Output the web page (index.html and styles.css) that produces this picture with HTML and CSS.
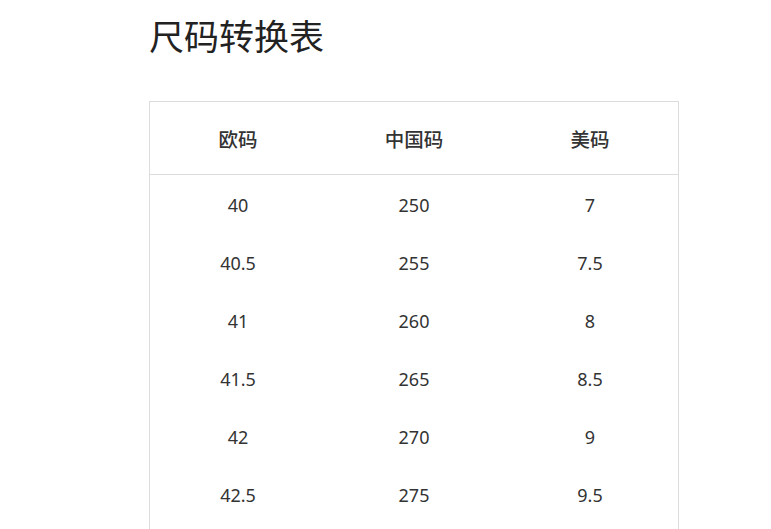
FILE: index.html
```html
<!DOCTYPE html>
<html lang="zh">
<head>
<meta charset="utf-8">
<title>尺码转换表</title>
<link rel="stylesheet" href="styles.css">
</head>
<body>
<div class="page">
  <h1 class="title">尺码转换表</h1>
  <div class="table-wrap">
    <table class="size-table">
      <thead>
        <tr><th>欧码</th><th>中国码</th><th>美码</th></tr>
      </thead>
      <tbody>
        <tr><td>40</td><td>250</td><td>7</td></tr>
        <tr><td>40.5</td><td>255</td><td>7.5</td></tr>
        <tr><td>41</td><td>260</td><td>8</td></tr>
        <tr><td>41.5</td><td>265</td><td>8.5</td></tr>
        <tr><td>42</td><td>270</td><td>9</td></tr>
        <tr><td>42.5</td><td>275</td><td>9.5</td></tr>
      </tbody>
    </table>
  </div>
</div>
</body>
</html>
```
FILE: styles.css
```css
html, body {
  margin: 0;
  padding: 0;
  background: #fff;
}
body {
  font-family: "Noto Sans", "Noto Sans CJK SC", sans-serif;
  color: #333;
}
.page {
  padding: 10px 0 0 149px;
  width: 530px;
}
.title {
  margin: 0;
  font-family: "Noto Sans CJK SC", sans-serif;
  font-size: 35px;
  line-height: 50px;
  font-weight: 400;
  color: #222;
}
.table-wrap {
  margin-top: 41px;
  border: 1px solid #dcdcdc;
  border-bottom: none;
  padding-bottom: 30px;
}
.size-table {
  width: 100%;
  border-collapse: collapse;
  table-layout: fixed;
}
.size-table th {
  height: 72px;
  font-family: "Noto Sans CJK SC", sans-serif;
  font-size: 19.5px;
  font-weight: 500;
  color: #333;
  border-bottom: 1px solid #dcdcdc;
  padding: 0;
  text-align: center;
}
.size-table td {
  height: 58px;
  box-sizing: border-box;
  font-size: 18px;
  color: #333;
  padding: 2px 0 0;
  text-align: center;
}
```
